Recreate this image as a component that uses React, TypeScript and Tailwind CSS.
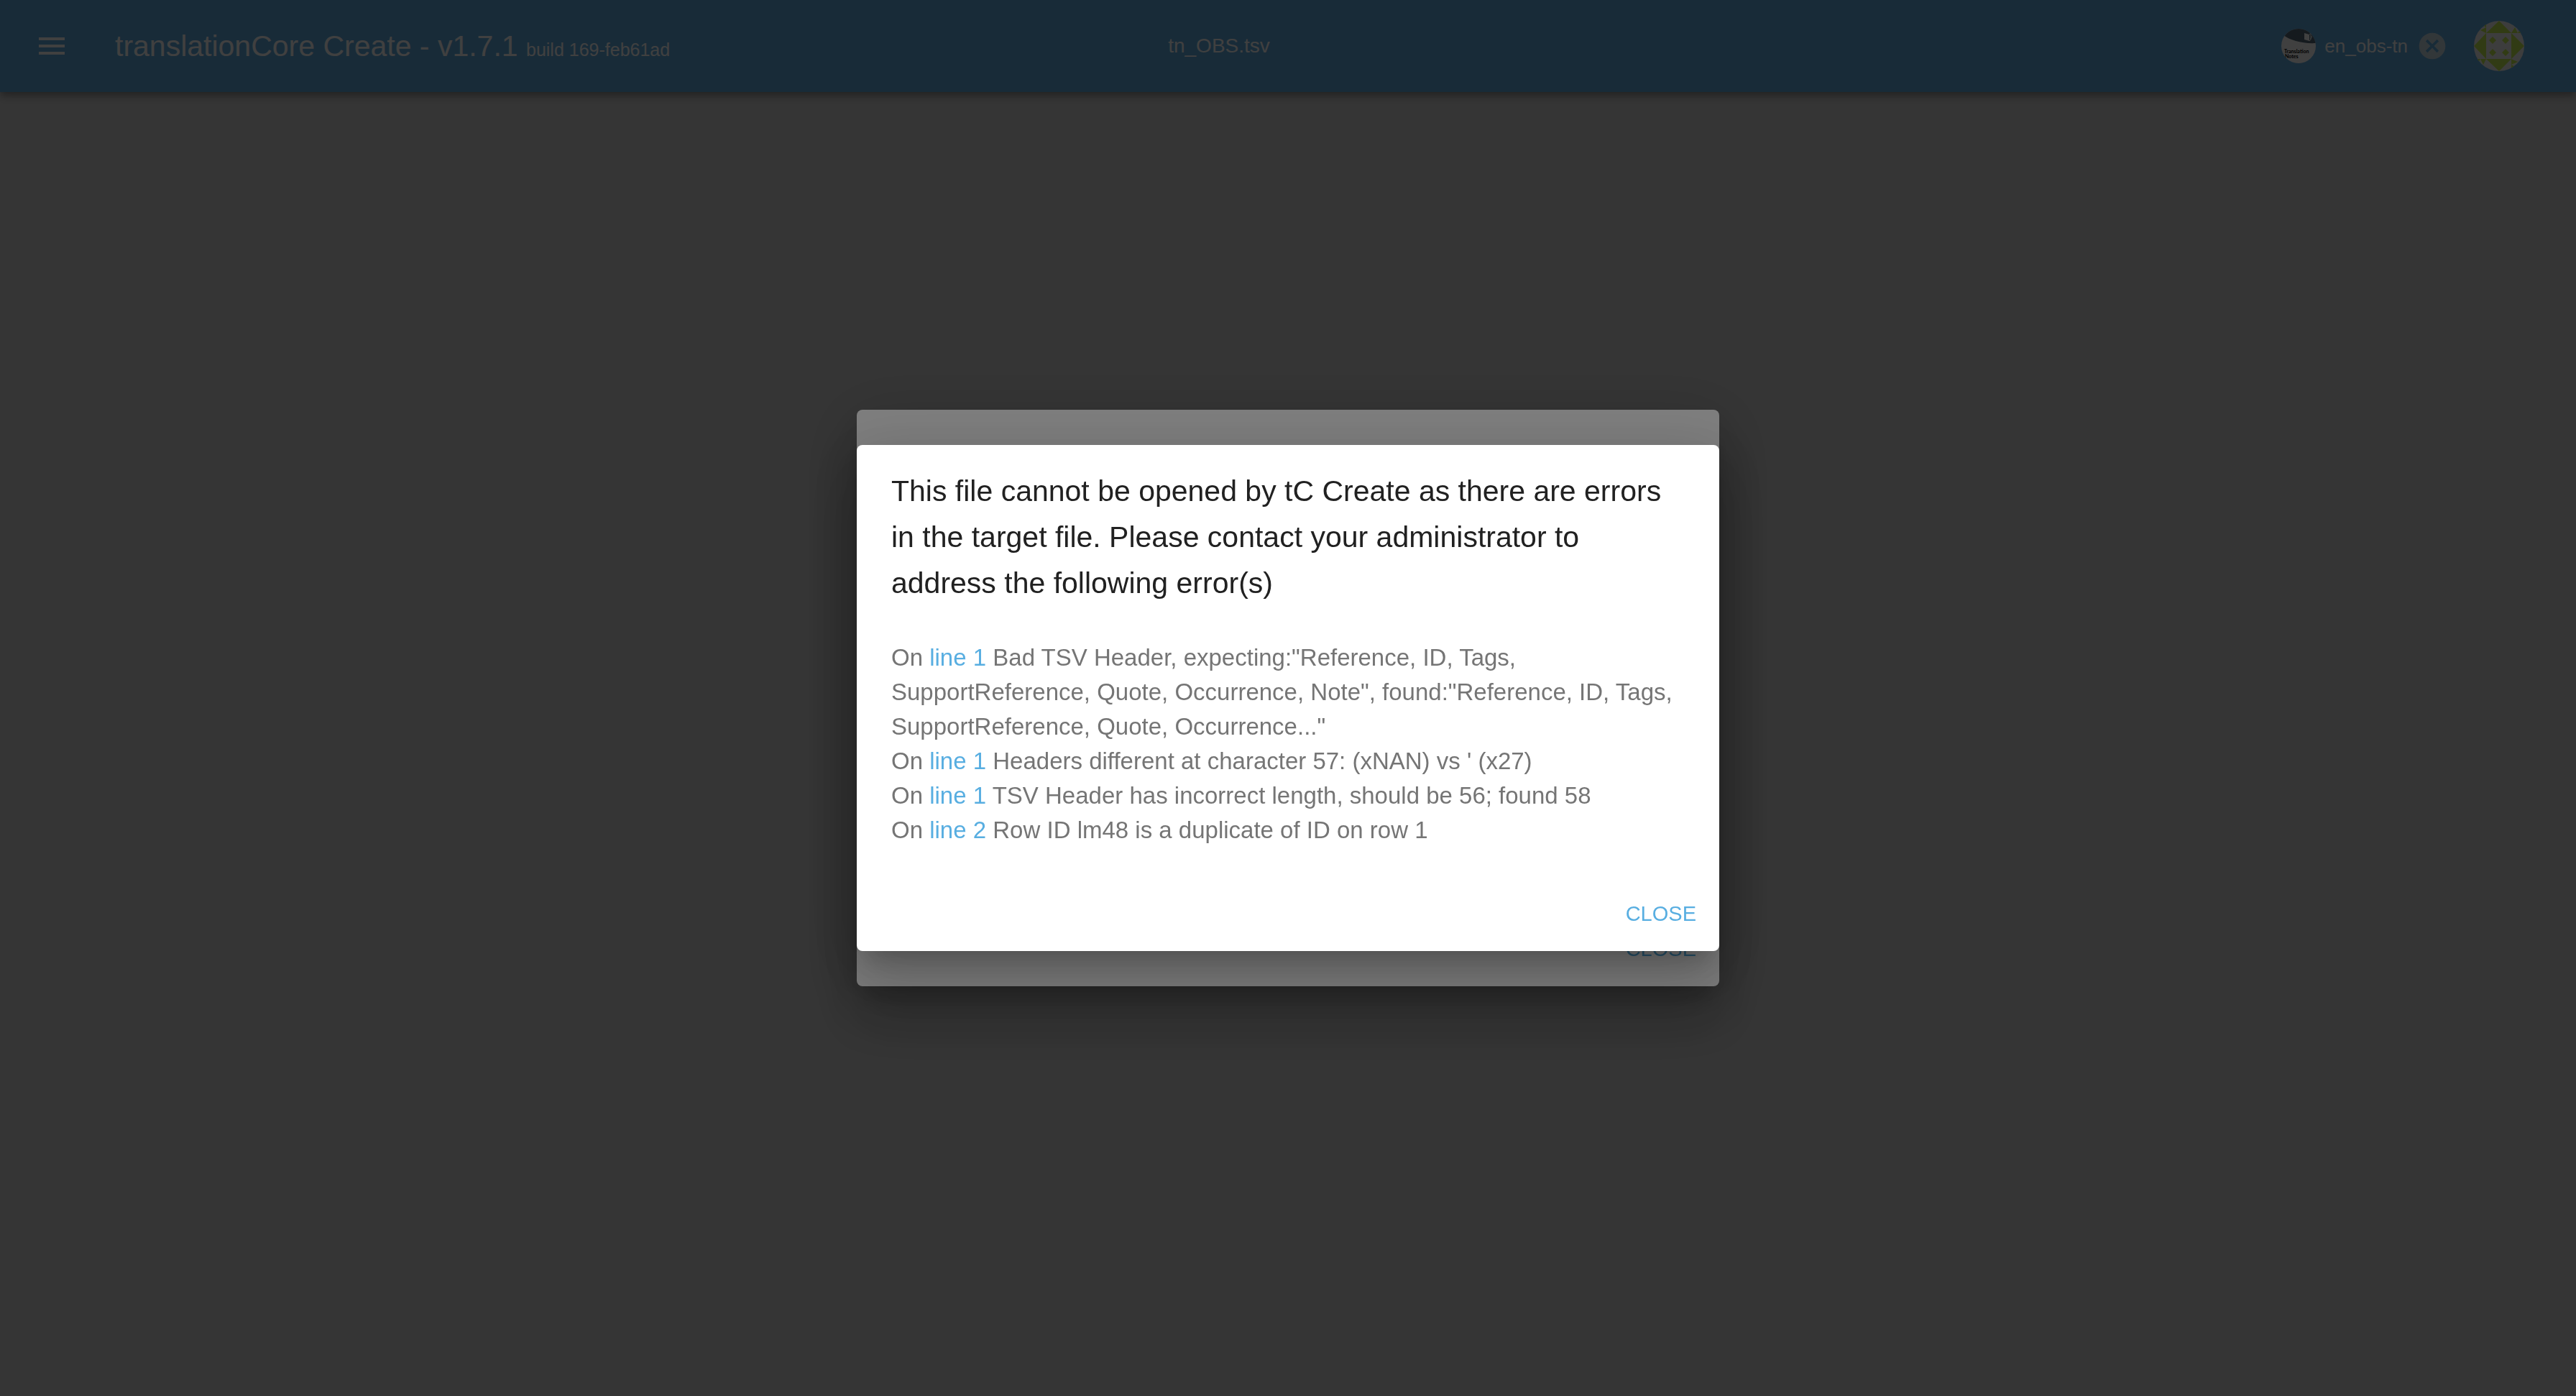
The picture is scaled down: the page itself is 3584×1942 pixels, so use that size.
import { MdCancel, MdMenu } from "react-icons/md";

const errors = [
  { line: 1, text: 'Bad TSV Header, expecting:"Reference, ID, Tags, SupportReference, Quote, Occurrence, Note", found:"Reference, ID, Tags, SupportReference, Quote, Occurrence..."' },
  { line: 1, text: "Headers different at character 57: (xNAN) vs ' (x27)" },
  { line: 1, text: "TSV Header has incorrect length, should be 56; found 58" },
  { line: 2, text: "Row ID lm48 is a duplicate of ID on row 1" },
];

const paper =
  "w-full max-w-[1200px] rounded-lg bg-white shadow-[0_22px_30px_-14px_rgba(0,0,0,0.2),0_48px_76px_6px_rgba(0,0,0,0.14),0_18px_92px_16px_rgba(0,0,0,0.12)]";

function NotesLogo() {
  return (
    <svg viewBox="0 0 48 48" className="size-12 rounded-full" role="img" aria-label="Translation Notes">
      <rect width="48" height="48" fill="#fff" />
      <path d="M0 0H48V20C30 21 12 16 3 9L0 7Z" fill="#546878" />
      <path d="M32 6l7 2v9l-7-2z" fill="#fff" />
      <path d="M39 8l2-2v9l-2 2M40 14q3-1 2-4" fill="none" stroke="#fff" />
      <text x="4" y="34" fontSize="7" fontWeight="bold" fontFamily="Lato, sans-serif" fill="#000">Translation</text>
      <text x="5" y="41" fontSize="7" fontWeight="bold" fontFamily="Lato, sans-serif" fill="#000">Notes</text>
    </svg>
  );
}

function Identicon() {
  return (
    <svg viewBox="0 0 70 70" className="size-[70px] rounded-full" aria-hidden="true">
      <rect width="70" height="70" fill="#f4f4f4" />
      <g fill="#c4ec50">
        <path d="M17 17L35 0L52 17ZM17 53H52L35 70ZM17 17V53L0 35ZM52 17V53L70 35Z" />
        <path d="M26 22l5 5-5 5-5-5zM44 22l5 5-5 5-5-5zM26 39l5 5-5 5-5-5zM44 39l5 5-5 5-5-5z" />
        <path d="M17 0V9L9 13L17 17V9L9 4ZM52 17L57 9L61 17ZM61 17L66 9L70 17ZM52 53L61 57L52 61ZM52 61L61 66L52 70ZM17 53L13 61L9 53ZM9 53L4 61L0 53Z" />
      </g>
    </svg>
  );
}

export default function App() {
  return (
    <div className="min-h-screen bg-[#d4d4d4] font-['Liberation_Sans',Arial,sans-serif]">
      <header className="grid h-32 grid-cols-3 items-center bg-[#62ace0] px-12 text-white shadow-[0_4px_8px_-2px_rgba(0,0,0,0.2),0_8px_10px_rgba(0,0,0,0.14),0_2px_20px_rgba(0,0,0,0.12)]">
        <div className="flex items-center">
          <button aria-label="Menu" className="size-12">
            <MdMenu className="size-12" />
          </button>
          <h1 className="ml-16 pt-1 text-[41px] leading-16 whitespace-nowrap">
            translationCore Create - v1.7.1 <small className="text-[25px]">build 169-feb61ad</small>
          </h1>
        </div>
        <p className="pr-48 text-center text-[28px]">tn_OBS.tsv</p>
        <div className="flex items-center justify-end pr-6">
          <NotesLogo />
          <span className="ml-3 text-[26px]">en_obs-tn</span>
          <button aria-label="Remove en_obs-tn" className="ml-3 text-[#c8dae4]">
            <MdCancel className="size-11" />
          </button>
          <button aria-label="Account" className="ml-9">
            <Identicon />
          </button>
        </div>
      </header>

      <div className="fixed inset-0 flex items-center justify-center bg-black/50">
        <div className={paper}>
          <div className="flex h-[802px] items-end justify-end px-8 pb-8">
            <button className="text-[29px] leading-10 text-[#58aee1]">CLOSE</button>
          </div>
        </div>
      </div>

      <div className="fixed inset-0 flex items-center justify-center bg-black/50">
        <div role="dialog" aria-modal="true" aria-labelledby="dialog-title" className={paper}>
          <h2 id="dialog-title" className="px-12 py-8 text-[41px] leading-16 text-[#212121]">
            This file cannot be opened by tC Create as there are errors in the target file. Please contact your administrator to address the following error(s)
          </h2>
          <ul className="px-12 pt-4 pb-12 text-[33px] leading-12 text-[#757575]">
            {errors.map((error) => (
              <li key={error.text}>
                On <a href="#error" className="text-[#58aee1]">line {error.line}</a> {error.text}
              </li>
            ))}
          </ul>
          <div className="flex justify-end px-8 pt-6 pb-8">
            <button className="text-[29px] leading-10 text-[#58aee1]">CLOSE</button>
          </div>
        </div>
      </div>
    </div>
  );
}
